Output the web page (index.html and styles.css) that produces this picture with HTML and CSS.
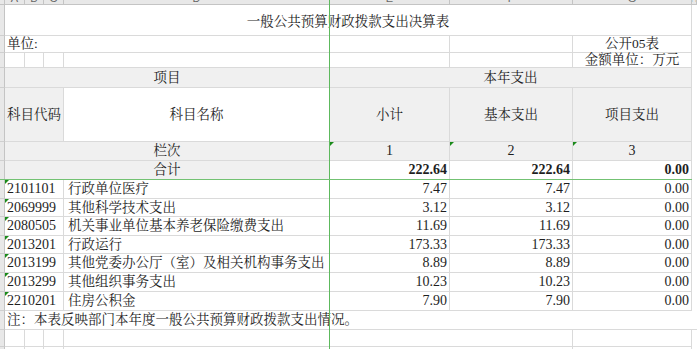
FILE: index.html
```html
<!DOCTYPE html>
<html lang="zh-CN">
<head>
<meta charset="utf-8">
<title>一般公共预算财政拨款支出决算表</title>
<link rel="stylesheet" href="styles.css">
</head>
<body>
<div class="wrap">
  <div class="sheet">
    <!-- column headers -->
    <div class="ch corner"></div>
    <div class="ch"><span>A</span></div>
    <div class="ch"><span>B</span></div>
    <div class="ch"><span>C</span></div>
    <div class="ch"><span>D</span></div>
    <div class="ch"><span>E</span></div>
    <div class="ch"><span>F</span></div>
    <div class="ch"><span>G</span></div>
    <div class="ch"><span>H</span></div>

    <!-- row 1 title -->
    <div class="rh"></div>
    <div class="cell s7 c title">一般公共预算财政拨款支出决算表</div>
    <div class="cell ex"></div>

    <!-- row 2 -->
    <div class="rh"></div>
    <div class="cell s5 l">单位:</div>
    <div class="cell"></div>
    <div class="cell c">公开05表</div>
    <div class="cell ex"></div>

    <!-- row 3 -->
    <div class="rh"></div>
    <div class="cell"></div>
    <div class="cell"></div>
    <div class="cell"></div>
    <div class="cell"></div>
    <div class="cell"></div>
    <div class="cell"></div>
    <div class="cell c">金额单位：万元</div>
    <div class="cell ex"></div>

    <!-- row 4 -->
    <div class="rh"></div>
    <div class="cell s4 c g">项目</div>
    <div class="cell s3 c g">本年支出</div>
    <div class="cell ex"></div>

    <!-- row 5 -->
    <div class="rh"></div>
    <div class="cell s3 c g">科目代码</div>
    <div class="cell c">科目名称</div>
    <div class="cell c g">小计</div>
    <div class="cell c g">基本支出</div>
    <div class="cell c g">项目支出</div>
    <div class="cell ex"></div>

    <!-- row 6 -->
    <div class="rh"></div>
    <div class="cell s4 c g">栏次</div>
    <div class="cell c g tri num">1</div>
    <div class="cell c g tri num">2</div>
    <div class="cell c g tri num">3</div>
    <div class="cell ex"></div>

    <!-- row 7 -->
    <div class="rh"></div>
    <div class="cell s4 c g">合计</div>
    <div class="cell r b">222.64</div>
    <div class="cell r b">222.64</div>
    <div class="cell r b">0.00</div>
    <div class="cell ex"></div>

    <!-- data -->
    <div class="rh"></div>
    <div class="cell s3 l tri num">2101101</div>
    <div class="cell n">行政单位医疗</div>
    <div class="cell r">7.47</div>
    <div class="cell r">7.47</div>
    <div class="cell r">0.00</div>
    <div class="cell ex"></div>

    <div class="rh"></div>
    <div class="cell s3 l tri num">2069999</div>
    <div class="cell n">其他科学技术支出</div>
    <div class="cell r">3.12</div>
    <div class="cell r">3.12</div>
    <div class="cell r">0.00</div>
    <div class="cell ex"></div>

    <div class="rh"></div>
    <div class="cell s3 l tri num">2080505</div>
    <div class="cell n">机关事业单位基本养老保险缴费支出</div>
    <div class="cell r">11.69</div>
    <div class="cell r">11.69</div>
    <div class="cell r">0.00</div>
    <div class="cell ex"></div>

    <div class="rh"></div>
    <div class="cell s3 l tri num">2013201</div>
    <div class="cell n">行政运行</div>
    <div class="cell r">173.33</div>
    <div class="cell r">173.33</div>
    <div class="cell r">0.00</div>
    <div class="cell ex"></div>

    <div class="rh"></div>
    <div class="cell s3 l tri num">2013199</div>
    <div class="cell n">其他党委办公厅（室）及相关机构事务支出</div>
    <div class="cell r">8.89</div>
    <div class="cell r">8.89</div>
    <div class="cell r">0.00</div>
    <div class="cell ex"></div>

    <div class="rh"></div>
    <div class="cell s3 l tri num">2013299</div>
    <div class="cell n">其他组织事务支出</div>
    <div class="cell r">10.23</div>
    <div class="cell r">10.23</div>
    <div class="cell r">0.00</div>
    <div class="cell ex"></div>

    <div class="rh"></div>
    <div class="cell s3 l tri num">2210201</div>
    <div class="cell n">住房公积金</div>
    <div class="cell r">7.90</div>
    <div class="cell r">7.90</div>
    <div class="cell r">0.00</div>
    <div class="cell ex"></div>

    <!-- note -->
    <div class="rh"></div>
    <div class="cell s8 l note">注：本表反映部门本年度一般公共预算财政拨款支出情况。</div>

    <!-- empty rows -->
    <div class="rh"></div>
    <div class="cell"></div>
    <div class="cell"></div>
    <div class="cell"></div>
    <div class="cell s3"></div>
    <div class="cell"></div>
    <div class="cell ex"></div>

    <div class="rh"></div>
    <div class="cell"></div>
    <div class="cell"></div>
    <div class="cell"></div>
    <div class="cell s3"></div>
    <div class="cell"></div>
    <div class="cell ex"></div>
  </div>
  <div class="vline"></div>
  <div class="hline"></div>
</div>
</body>
</html>
```

FILE: styles.css
```css
html, body {
  margin: 0;
  padding: 0;
  background: #ffffff;
}

.wrap {
  position: relative;
  width: 697px;
  height: 349px;
  overflow: hidden;
}

.sheet {
  display: grid;
  grid-template-columns: 5px 20px 19px 20px 266px 120px 123px 119px 5px;
  grid-template-rows: 5px 31px 17px 15px 20px 54px 19px 19px 19px 18px 19px 18px 19px 19px 19px 19px 17px 20px;
  font-family: "Liberation Serif", "Noto Serif CJK SC", "Noto Sans CJK SC", serif;
  font-size: 13.5px;
  line-height: 1;
  color: #1e1e1e;
}

.ch {
  box-sizing: border-box;
  background: #e8e8e8;
  border-right: 1px solid #c4c4c4;
  border-bottom: 1px solid #c4c4c4;
  display: flex;
  align-items: flex-end;
  justify-content: center;
  overflow: hidden;
  font-family: "Liberation Sans", sans-serif;
  font-size: 11px;
  color: #666;
}

.ch span {
  line-height: 11px;
  flex: none;
}

.rh {
  box-sizing: border-box;
  background: #e8e8e8;
  border-right: 1px solid #c4c4c4;
  border-bottom: 1px solid #cfcfcf;
}

.cell {
  box-sizing: border-box;
  position: relative;
  display: flex;
  align-items: center;
  white-space: nowrap;
  min-width: 0;
  border-right: 1px solid #dadada;
  border-bottom: 1px solid #dadada;
  background: #ffffff;
}

.ex {
  border-right: none;
  border-bottom: none;
}

.s3 { grid-column: span 3; }
.s4 { grid-column: span 4; }
.s5 { grid-column: span 5; }
.s7 { grid-column: span 7; }
.s8 { grid-column: span 8; border-right: none; }

.c { justify-content: center; }
.l { justify-content: flex-start; padding-left: 2px; }
.n { justify-content: flex-start; padding-left: 4px; }
.r { justify-content: flex-end; padding-right: 2px; font-size: 14px; }
.num { font-size: 14px; }
.b { font-weight: bold; }
.g { background: #f0f0f0; }

.title {
  padding-top: 3px;
}

.tri::before {
  content: "";
  position: absolute;
  left: 0;
  top: 0;
  width: 0;
  height: 0;
  border-top: 4px solid #1a8a1a;
  border-right: 4px solid transparent;
}

.vline {
  position: absolute;
  left: 329px;
  top: 0;
  width: 1px;
  height: 349px;
  background: #5db95d;
}

.hline {
  position: absolute;
  left: 0;
  top: 179px;
  width: 692px;
  height: 1px;
  background: #73c273;
}
```
